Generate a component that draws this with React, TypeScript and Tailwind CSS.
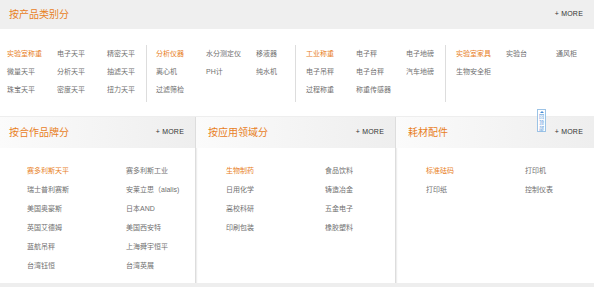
import React from 'react';

// top category groups, first item of each group is the highlighted one
const categoryGroups = [
  ['实验室称重', '电子天平', '精密天平', '微量天平', '分析天平', '抽滤天平', '珠宝天平', '密度天平', '扭力天平'],
  ['分析仪器', '水分测定仪', '移液器', '离心机', 'PH计', '纯水机', '过滤筛检'],
  ['工业称重', '电子秤', '电子地磅', '电子吊秤', '电子台秤', '汽车地磅', '过程称重', '称重传感器'],
  ['实验室家具', '实验台', '通风柜', '生物安全柜'],
];

const panels = [
  {
    title: '按合作品牌分',
    items: ['赛多利斯天平', '赛多利斯工业', '瑞士普利赛斯', '安莱立思（alalis)', '美国奥豪斯', '日本AND', '英国艾德姆', '美国西安特', '蓝航吊秤', '上海舜宇恒平', '台湾钰恒', '台湾英展'],
  },
  {
    title: '按应用领域分',
    items: ['生物制药', '食品饮料', '日用化学', '铸造冶金', '高校科研', '五金电子', '印刷包装', '橡胶塑料'],
  },
  {
    title: '耗材配件',
    items: ['标准砝码', '打印机', '打印纸', '控制仪表'],
  },
];

const More = () => (
  <span className="text-[7px] text-[#333] tracking-[0.2px]">+ MORE</span>
);

const App = () => {
  return (
    <div className="relative w-[594px] h-[287px] overflow-hidden bg-white font-['Liberation_Sans','Noto_Sans_CJK_SC',sans-serif]">
      {/* product categories */}
      <div className="flex h-[29px] items-center justify-between bg-[#efefef] pl-[9px] pr-[11px]">
        <span className="text-[10px] text-[#e8801e]">按产品类别分</span>
        <More />
      </div>

      <div className="mt-[16px] flex h-[57px]">
        {categoryGroups.map((group, gi) => (
          <div
            key={gi}
            className={
              gi === 0
                ? 'w-[146px] pl-[7px]'
                : gi === 1
                ? 'w-[149px] border-l border-[#dddddd] pl-[9px]'
                : gi === 2
                ? 'w-[150px] border-l border-[#dddddd] pl-[10px]'
                : 'flex-1 border-l border-[#dddddd] pl-[10px]'
            }
          >
            <div className="grid grid-cols-[50px_50px_50px]">
              {group.map((item, i) => (
                <span
                  key={item}
                  className={`whitespace-nowrap text-[7px] leading-[18px] ${i === 0 ? 'text-[#e8801e]' : 'text-[#707070]'}`}
                >
                  {item}
                </span>
              ))}
            </div>
          </div>
        ))}
      </div>

      {/* brand / field / consumables panels */}
      <div className="mt-[14px] flex h-[167px] border-t border-[#eeeeee]">
        {panels.map((panel, pi) => (
          <div
            key={panel.title}
            className={
              pi === 0
                ? 'w-[196px] shrink-0 border-r border-[#dddddd] shadow-[1px_0_1px_#eeeeee]'
                : pi === 1
                ? 'w-[200px] shrink-0 border-r border-[#dddddd] shadow-[1px_0_1px_#eeeeee]'
                : 'w-[198px] shrink-0'
            }
          >
            <div
              className={`flex h-[31px] items-center justify-between bg-linear-to-r from-[#fbfbfb] to-[#eeeeee] pr-[11px] ${pi === 0 ? 'pl-[9px]' : 'pl-[12px]'}`}
            >
              <span className="text-[10px] text-[#e8801e]">{panel.title}</span>
              <More />
            </div>
            <div className={`grid grid-cols-[99px_auto] pt-[13px] ${pi === 0 ? 'pl-[27px]' : 'pl-[30px]'}`}>
              {panel.items.map((item, i) => (
                <span
                  key={item}
                  className={`whitespace-nowrap text-[7px] leading-[19px] ${i === 0 ? 'text-[#e8801e]' : 'text-[#707070]'}`}
                >
                  {item}
                </span>
              ))}
            </div>
          </div>
        ))}
      </div>
      <div className="h-[4px] bg-[#eeeeee]" />

      {/* floating back-to-top tab */}
      <div className="absolute left-[537px] top-[109px] flex h-[23px] w-[9px] flex-col items-center border border-[#9cc3e6] bg-white pt-[1px]">
        <span className="h-0 w-0 border-x-[2px] border-b-[2px] border-x-transparent border-b-[#4a8fd6]" />
        <span className="text-[5px] leading-[6px] text-[#4a8fd6]">回</span>
        <span className="text-[5px] leading-[6px] text-[#4a8fd6]">顶</span>
        <span className="text-[5px] leading-[6px] text-[#4a8fd6]">部</span>
      </div>
    </div>
  );
};

export default App;
